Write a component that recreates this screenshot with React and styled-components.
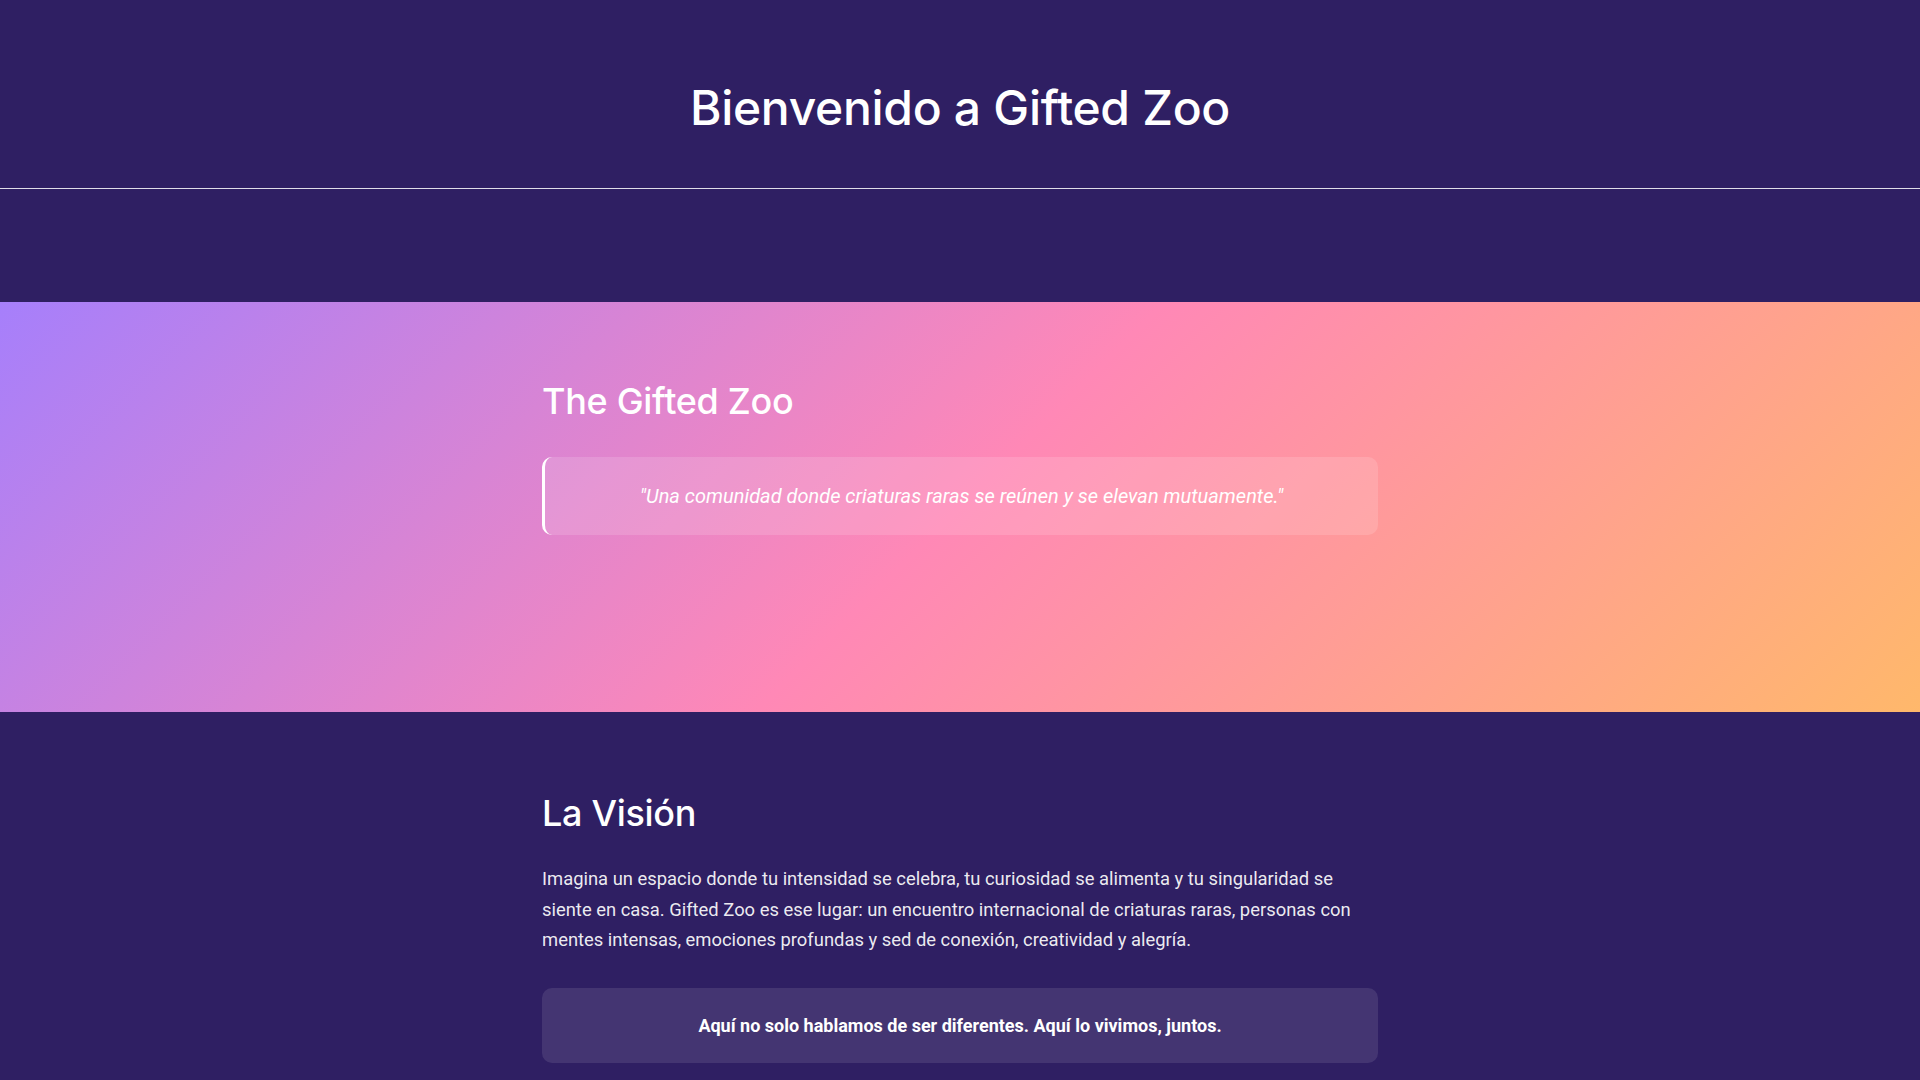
import styled, { createGlobalStyle } from 'styled-components'

const GlobalStyle = createGlobalStyle`
	html, body {
		margin: 0;
		padding: 0;
	}
	body {
		background: #2f1f63;
		color: #ffffff;
		font-family: Roboto, 'Liberation Sans', sans-serif;
	}
	* {
		box-sizing: border-box;
	}
`

const Header = styled.header`
	padding: 79px 1rem 51px;
	text-align: center;
	border-bottom: 1px solid rgba(255, 255, 255, 0.85);
`

const Title = styled.h1`
	margin: 0;
	font-family: Inter, 'Liberation Sans', sans-serif;
	font-size: 48px;
	font-weight: 500;
	line-height: 1.2;
	letter-spacing: -0.3px;
`

const Nav = styled.nav`
	height: 113px;
`

const Section = styled.section`
	padding: ${(p) => p.$pad};
	background: ${(p) =>
		p.$hero
			? 'linear-gradient(135deg, #a67ffb 0%, #ff88b6 50%, #ffb86b 100%)'
			: '#2f1f63'};
`

const Container = styled.div`
	max-width: 900px;
	margin: 0 auto;
	padding: 0 2rem;
`

const Heading = styled.h2`
	margin: 0 0 ${(p) => p.$gap};
	font-family: Inter, 'Liberation Sans', sans-serif;
	font-size: 36px;
	font-weight: 500;
	line-height: 1.2;
	letter-spacing: -0.3px;
`

const Quote = styled.blockquote`
	margin: 0;
	padding: 24px 32px;
	border-left: 3px solid #ffffff;
	border-radius: 10px;
	background: rgba(255, 255, 255, 0.14);
	text-align: center;
	font-size: 20px;
	font-style: italic;
	font-weight: 400;
	line-height: 1.5;
`

const Text = styled.p`
	margin: 0 0 32px;
	font-size: 18.4px;
	line-height: 1.66;
	color: rgba(255, 255, 255, 0.92);
`

const Highlight = styled.div`
	padding: 25px 24px;
	border-radius: 10px;
	background: rgba(255, 255, 255, 0.1);
	text-align: center;
	font-size: 18px;
	font-weight: 700;
	line-height: 1.4;
`

const App = () => {
	return (
		<>
			<GlobalStyle />
			<Header>
				<Title>Bienvenido a Gifted Zoo</Title>
			</Header>
			<Nav />
			<Section $hero $pad='78px 0 177px'>
				<Container>
					<Heading $gap='34px'>The Gifted Zoo</Heading>
					<Quote>
						"Una comunidad donde criaturas raras se reúnen y se elevan
						mutuamente."
					</Quote>
				</Container>
			</Section>
			<Section $pad='80px 0 120px'>
				<Container>
					<Heading $gap='29px'>La Visión</Heading>
					<Text>
						Imagina un espacio donde tu intensidad se celebra, tu curiosidad se
						alimenta y tu singularidad se siente en casa. Gifted Zoo es ese
						lugar: un encuentro internacional de criaturas raras, personas con
						mentes intensas, emociones profundas y sed de conexión, creatividad
						y alegría.
					</Text>
					<Highlight>
						Aquí no solo hablamos de ser diferentes. Aquí lo vivimos, juntos.
					</Highlight>
				</Container>
			</Section>
		</>
	)
}

export default App
